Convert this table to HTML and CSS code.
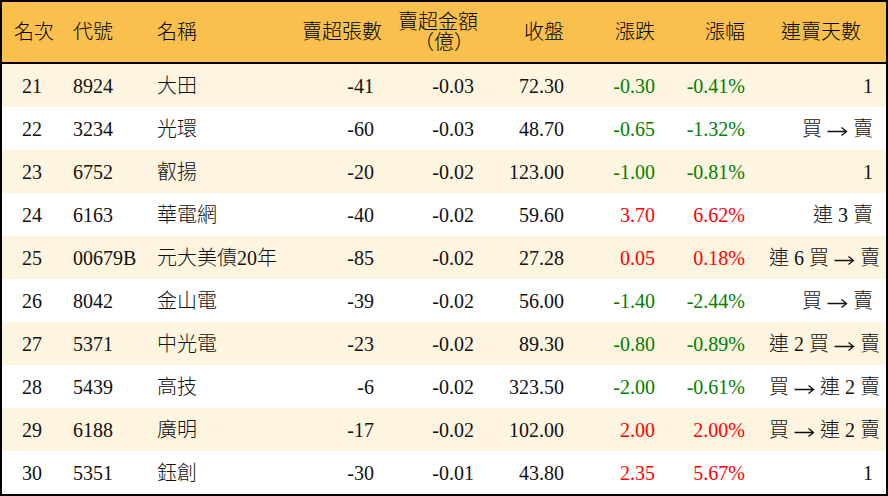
FILE: index.html
```html
<!DOCTYPE html>
<html lang="zh-Hant">
<head>
<meta charset="utf-8">
<title>賣超排行</title>
<link rel="stylesheet" href="styles.css">
</head>
<body>
<div class="board">
  <div class="row head">
    <div class="c center">名次</div>
    <div class="c left">代號</div>
    <div class="c left">名稱</div>
    <div class="c right">賣超張數</div>
    <div class="c right two">賣超金額<br><span class="p">（</span>億<span class="p">）</span></div>
    <div class="c right">收盤</div>
    <div class="c right">漲跌</div>
    <div class="c right">漲幅</div>
    <div class="c center">連賣天數</div>
  </div>
  <div class="row alt">
    <div class="c center">21</div><div class="c left">8924</div><div class="c left">大田</div>
    <div class="c right">-41</div><div class="c right">-0.03</div><div class="c right">72.30</div>
    <div class="c right down">-0.30</div><div class="c right down">-0.41%</div><div class="c right">1</div>
  </div>
  <div class="row">
    <div class="c center">22</div><div class="c left">3234</div><div class="c left">光環</div>
    <div class="c right">-60</div><div class="c right">-0.03</div><div class="c right">48.70</div>
    <div class="c right down">-0.65</div><div class="c right down">-1.32%</div><div class="c right">買 <svg class="arr" viewBox="0 0 21 12" aria-label="→"><path d="M0.5 6.5H19M14.5 2.5L19.5 6.5L14.5 10.5"/></svg> 賣</div>
  </div>
  <div class="row alt">
    <div class="c center">23</div><div class="c left">6752</div><div class="c left">叡揚</div>
    <div class="c right">-20</div><div class="c right">-0.02</div><div class="c right">123.00</div>
    <div class="c right down">-1.00</div><div class="c right down">-0.81%</div><div class="c right">1</div>
  </div>
  <div class="row">
    <div class="c center">24</div><div class="c left">6163</div><div class="c left">華電網</div>
    <div class="c right">-40</div><div class="c right">-0.02</div><div class="c right">59.60</div>
    <div class="c right up">3.70</div><div class="c right up">6.62%</div><div class="c right">連 3 賣</div>
  </div>
  <div class="row alt">
    <div class="c center">25</div><div class="c left">00679B</div><div class="c left">元大美債20年</div>
    <div class="c right">-85</div><div class="c right">-0.02</div><div class="c right">27.28</div>
    <div class="c right up">0.05</div><div class="c right up">0.18%</div><div class="c right">連 6 買 <svg class="arr" viewBox="0 0 21 12" aria-label="→"><path d="M0.5 6.5H19M14.5 2.5L19.5 6.5L14.5 10.5"/></svg> 賣</div>
  </div>
  <div class="row">
    <div class="c center">26</div><div class="c left">8042</div><div class="c left">金山電</div>
    <div class="c right">-39</div><div class="c right">-0.02</div><div class="c right">56.00</div>
    <div class="c right down">-1.40</div><div class="c right down">-2.44%</div><div class="c right">買 <svg class="arr" viewBox="0 0 21 12" aria-label="→"><path d="M0.5 6.5H19M14.5 2.5L19.5 6.5L14.5 10.5"/></svg> 賣</div>
  </div>
  <div class="row alt">
    <div class="c center">27</div><div class="c left">5371</div><div class="c left">中光電</div>
    <div class="c right">-23</div><div class="c right">-0.02</div><div class="c right">89.30</div>
    <div class="c right down">-0.80</div><div class="c right down">-0.89%</div><div class="c right">連 2 買 <svg class="arr" viewBox="0 0 21 12" aria-label="→"><path d="M0.5 6.5H19M14.5 2.5L19.5 6.5L14.5 10.5"/></svg> 賣</div>
  </div>
  <div class="row">
    <div class="c center">28</div><div class="c left">5439</div><div class="c left">高技</div>
    <div class="c right">-6</div><div class="c right">-0.02</div><div class="c right">323.50</div>
    <div class="c right down">-2.00</div><div class="c right down">-0.61%</div><div class="c right">買 <svg class="arr" viewBox="0 0 21 12" aria-label="→"><path d="M0.5 6.5H19M14.5 2.5L19.5 6.5L14.5 10.5"/></svg> 連 2 賣</div>
  </div>
  <div class="row alt">
    <div class="c center">29</div><div class="c left">6188</div><div class="c left">廣明</div>
    <div class="c right">-17</div><div class="c right">-0.02</div><div class="c right">102.00</div>
    <div class="c right up">2.00</div><div class="c right up">2.00%</div><div class="c right">買 <svg class="arr" viewBox="0 0 21 12" aria-label="→"><path d="M0.5 6.5H19M14.5 2.5L19.5 6.5L14.5 10.5"/></svg> 連 2 賣</div>
  </div>
  <div class="row">
    <div class="c center">30</div><div class="c left">5351</div><div class="c left">鈺創</div>
    <div class="c right">-30</div><div class="c right">-0.01</div><div class="c right">43.80</div>
    <div class="c right up">2.35</div><div class="c right up">5.67%</div><div class="c right">1</div>
  </div>
</div>
</body>
</html>
```

FILE: styles.css
```css
html, body {
  margin: 0;
  padding: 0;
  background: #ffffff;
}

.board {
  width: 888px;
  height: 496px;
  box-sizing: border-box;
  border: 2px solid #000000;
  font-family: "Liberation Serif", "Noto Sans CJK TC", serif;
  font-size: 20px;
  font-weight: 300;
  color: #111111;
  background: #ffffff;
}

.row {
  display: grid;
  grid-template-columns: 60px 83px 145px 96px 100px 90px 91px 90px 129px;
  height: 43px;
  align-items: center;
  white-space: nowrap;
}

.row.alt {
  background: #fef5e1;
}

.row.head {
  height: 60px;
  background: #f9c04e;
  border-bottom: 2px solid #000000;
  color: #000000;
}

.c {
  padding: 0 12px;
  line-height: 22px;
}

.c:last-child {
  padding-right: 13px;
}

.left { text-align: left; padding-left: 11px; }
.row > .c:nth-child(3) { padding-left: 12px; }
.center { text-align: center; }
.right { text-align: right; }

.two {
  line-height: 20px;
}

.p {
  display: inline-block;
  width: 20px;
  text-align: center;
}

.arr {
  display: inline-block;
  width: 21px;
  height: 12px;
  vertical-align: -1px;
  fill: none;
  stroke: #111111;
  stroke-width: 1.3;
}

.down { color: #008000; }
.up { color: #ff0000; }
```
